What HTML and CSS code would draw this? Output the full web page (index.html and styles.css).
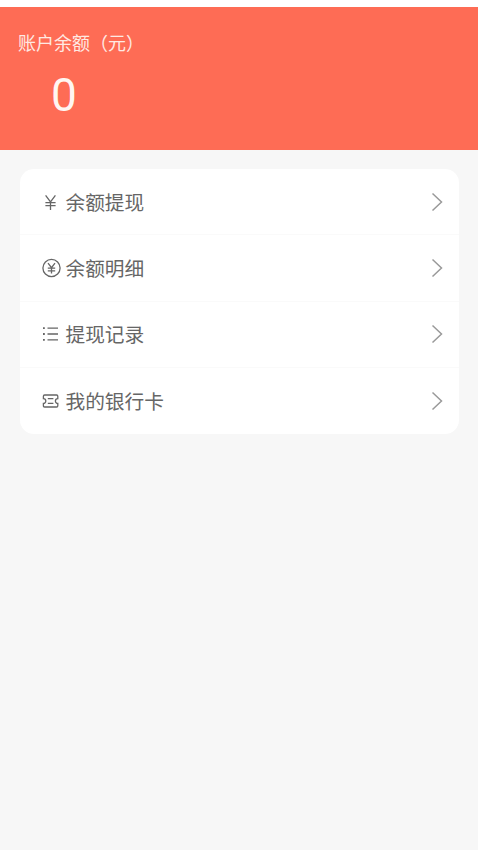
FILE: index.html
```html
<!DOCTYPE html>
<html lang="zh-CN">
<head>
    <meta charset="UTF-8">
    <meta name="viewport" content="width=device-width, initial-scale=1.0">
    <title>账户余额</title>
    <link rel="stylesheet" href="styles.css">
</head>
<body>
    <div class="balance">
        <div class="balance-label">账户余额（元）</div>
        <div class="balance-value">0</div>
    </div>

    <div class="menu">
        <div class="menu-item">
            <svg class="menu-icon" viewBox="0 0 20 20">
                <path d="M3.6 3.4 8.5 10l4.9-6.6M3.4 10.6h10.2M3.4 13.6h10.2M8.5 10v8"/>
            </svg>
            <span class="menu-text">余额提现</span>
            <svg class="menu-arrow" viewBox="0 0 12 20">
                <path d="M1.5 1.5 10.5 10l-9 8.5"/>
            </svg>
        </div>
        <div class="menu-item">
            <svg class="menu-icon" viewBox="0 0 20 20">
                <circle cx="9.5" cy="10" r="8.6"/>
                <path d="M6 5.2 9.5 9.6 13 5.2M5.8 10.2h7.4M5.8 12.8h7.4M9.5 9.6v6"/>
            </svg>
            <span class="menu-text">余额明细</span>
            <svg class="menu-arrow" viewBox="0 0 12 20">
                <path d="M1.5 1.5 10.5 10l-9 8.5"/>
            </svg>
        </div>
        <div class="menu-item">
            <svg class="menu-icon" viewBox="0 0 20 20">
                <path d="M5.5 4.2H16M5.5 10H16M5.5 15.8H16"/>
                <path class="dots" d="M1 4.2h1.8M1 10h1.8M1 15.8h1.8"/>
            </svg>
            <span class="menu-text">提现记录</span>
            <svg class="menu-arrow" viewBox="0 0 12 20">
                <path d="M1.5 1.5 10.5 10l-9 8.5"/>
            </svg>
        </div>
        <div class="menu-item">
            <svg class="menu-icon" viewBox="0 0 20 20">
                <path d="M2.6 4h12q1.2 0 1.2 1.2v2.4a2.4 2.4 0 0 0 0 4.8v2.4q0 1.2-1.2 1.2h-12q-1.2 0-1.2-1.2v-2.4a2.4 2.4 0 0 0 0-4.8V5.2q0-1.2 1.2-1.2Z"/>
                <path d="M5.8 7.600h5.600M5.800 12.400h5.600"/>
            </svg>
            <span class="menu-text">我的银行卡</span>
            <svg class="menu-arrow" viewBox="0 0 12 20">
                <path d="M1.5 1.5 10.5 10l-9 8.5"/>
            </svg>
        </div>
    </div>
</body>
</html>
```

FILE: styles.css
```css
* {
    margin: 0;
    padding: 0;
    box-sizing: border-box;
    font-family: "Noto Sans CJK SC", "Noto Sans", sans-serif;
}

html {
    background-color: #f7f7f7;
}

body {
    height: 850px;
    padding-top: 7px;
    background: linear-gradient(#ffffff 7px, #f7f7f7 7px);
    overflow: hidden;
}

.balance {
    height: 142.5px;
    padding: 22px 0 0 18px;
    background-color: #fe6c55;
    color: #fff;
}

.balance-label {
    font-size: 18px;
    line-height: 26px;
    color: #ffe9e3;
}

.balance-value {
    margin: 15px 0 0 33px;
    font-family: Roboto, "Noto Sans", sans-serif;
    font-size: 46px;
    line-height: 50px;
    color: #fff6f2;
}

.menu {
    margin: 19.5px 19px 0 20px;
    background-color: #fff;
    border-radius: 14px;
}

.menu-item {
    display: flex;
    align-items: center;
    height: 66.25px;
    padding: 0 16px 0 22px;
    border-bottom: 1px solid #fafafa;
}

.menu-item:last-child {
    border-bottom: none;
}

.menu-icon {
    width: 20px;
    height: 20px;
    margin-right: 3.5px;
    flex-shrink: 0;
    fill: none;
    stroke: #666;
    stroke-width: 1.3;
}

.menu-icon .dots {
    stroke-width: 1.8;
}

.menu-text {
    flex: 1;
    font-size: 19.7px;
    line-height: 28px;
    color: #666;
}

.menu-arrow {
    width: 12px;
    height: 20px;
    fill: none;
    stroke: #999;
    stroke-width: 1.5;
}
```
